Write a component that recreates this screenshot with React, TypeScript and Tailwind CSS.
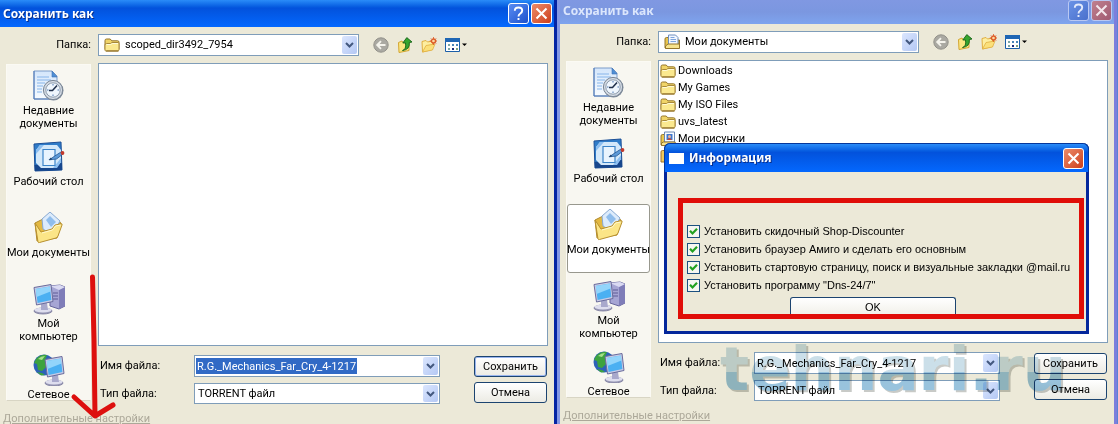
import type { ReactNode } from "react";
import clsx from "clsx";

function FolderIcon() {
  return (
    <svg width="16" height="16" viewBox="0 0 16 16" aria-hidden="true">
      <path d="M1 12.500V3.500Q1 2 2.500 2h3.700l1.600 1.800h5.700Q15 3.800 15 5v7.500z" fill="#f0d468" stroke="#94752a" />
      <path d="M1 13.600V8Q1 6.500 2.500 6.500h4L8 5.500h6q1 0 1 1v6q0 1.200-1 1.200H2.300q-1.300.2-1.300-.1z" fill="#fbe98f" stroke="#a8893a" />
      <path d="M2 14.200h12.500" stroke="#94752a" />
      <path d="M2.500 7.500h4.300l1.500-1H14" fill="none" stroke="#fffbd8" />
    </svg>
  );
}

function DocumentsFolderIcon() {
  return (
    <svg width="16" height="16" viewBox="0 0 16 16" aria-hidden="true">
      <path d="M1 14V5q0-1.500 1.500-1.500H5V14z" fill="#e9c64f" stroke="#94752a" />
      <path d="M14 14V6h1.500v8z" fill="#e9c64f" stroke="#94752a" />
      <path d="M4.500 1h7L14 3.500V12H4.500z" fill="#f2f7ff" stroke="#6f8fbd" />
      <path d="M6.500 3.500h4M6.500 5.500h5.500M6.500 7.500h5.500" stroke="#7fa5dc" />
      <path d="M1.500 14.500V12l2.500-2h11.500v4.500z" fill="#f7e38c" stroke="#94752a" />
    </svg>
  );
}

function PicturesFolderIcon() {
  return (
    <svg width="16" height="16" viewBox="0 0 16 16" aria-hidden="true">
      <path d="M1 14V5q0-1.500 1.500-1.500H5V14z" fill="#e9c64f" stroke="#94752a" />
      <path d="M4.500 1h10v10h-10z" fill="#f8fbff" stroke="#6b87b4" />
      <path d="M6.500 3h6v6h-6z" fill="#3f78cf" />
      <circle cx="9.500" cy="5.500" r="1.500" fill="#f0b49a" />
      <path d="M7 9q2.500-3.500 5 0z" fill="#c9452f" />
      <path d="M1.500 14.500V12L3.500 11h11.700v3.500z" fill="#f7e38c" stroke="#94752a" />
    </svg>
  );
}

function MusicFolderIcon() {
  return (
    <svg width="16" height="16" viewBox="0 0 16 16" aria-hidden="true">
      <path d="M1 14V4q0-1.500 1.500-1.500h4L8 4h6v10z" fill="#f0c95c" stroke="#a0702a" />
      <path d="M5 11V6l5-1v5" fill="none" stroke="#d04b30" strokeWidth="1.500" />
    </svg>
  );
}

function RecentIcon() {
  return (
    <svg width="32" height="32" viewBox="0 0 32 32" aria-hidden="true">
      <defs>
        <linearGradient id="recent-page" x1="0" y1="0" x2="0" y2="1">
          <stop offset="0" stopColor="#d4e6fb" />
          <stop offset="1" stopColor="#f7fbff" />
        </linearGradient>
      </defs>
      <path d="M1 1h18l5 5v23H1z" fill="url(#recent-page)" stroke="#7d9cc9" />
      <path d="M1 1v28h20" fill="none" stroke="#4f79b7" />
      <path d="M19 1v6h5z" fill="#4d8fd6" stroke="#3f74b5" strokeWidth=".6" />
      <path d="M4 7h12M4 10h14M4 13h8M4 16h6M4 19h5M4 22h5" stroke="#86b5ea" />
      <circle cx="20.500" cy="20.500" r="10" fill="#7b8798" />
      <circle cx="20" cy="20" r="9.600" fill="#d3dae3" stroke="#7b8796" />
      <circle cx="20" cy="20" r="7.200" fill="#eff6fd" stroke="#8f9dad" />
      <path d="M20 14v1.500M20 24.500V26M14 20h1.500M24.500 20H26" stroke="#4e78b2" />
      <path d="M24 15.500 19.500 20.500H16" fill="none" stroke="#22324c" strokeWidth="1.600" />
    </svg>
  );
}

function DesktopIcon() {
  return (
    <svg width="32" height="32" viewBox="0 0 32 32" aria-hidden="true">
      <path d="M1 3 28 1l1 28-27 1z" fill="#2f7cc9" stroke="#1c4f96" />
      <path d="M1.500 24 29 22v7L2 30z" fill="#17468c" />
      <path d="M7 4h17l4 5v12l-5 6H8l-5-5V9z" fill="#d3e8fa" />
      <path d="M7 4 3 9v4l8-9zM24 27l4-6v-4l-8 10z" fill="#8cbef0" />
      <path d="M10 8.500h12v16H10z" fill="#e9f4fe" stroke="#3c84c8" strokeWidth="1.200" />
      <path d="M21 15.500 28 11l2 2-6.500 5-7 .8z" fill="#5d9ad8" stroke="#24568f" strokeWidth=".8" />
      <path d="M15.500 19l2.500-2.500 1 2z" fill="#173d6b" />
      <circle cx="29.500" cy="12" r="1.900" fill="#c33a2c" />
    </svg>
  );
}

function MyDocumentsIcon() {
  return (
    <svg width="32" height="32" viewBox="0 0 32 32" aria-hidden="true">
      <path d="M2 11 10 7l13 1 5 3-4 15L4 29z" fill="#e3b840" stroke="#b08a2c" />
      <path d="M9 7 17 0l10 9-8 14-9-6z" fill="#dcebfb" stroke="#88a9d2" />
      <path d="M13 8l4-4 6 6-5 5z" fill="#8fbdec" />
      <path d="M2 11 5 30q.5 1 1.500.5L23 26q1.500-.5 2-2l4-11q.5-1.500-1-1.200L22 13l-3 4-11 3z" fill="#fbe587" stroke="#b8902f" />
      <path d="M9 21l10.500-3 3-4 5-1" fill="none" stroke="#fff9cf" />
    </svg>
  );
}

function MonitorShape() {
  return (
    <g>
      <ellipse cx="10" cy="28" rx="9" ry="3" fill="#9b9bb8" stroke="#77779a" strokeWidth=".8" />
      <ellipse cx="10" cy="27" rx="8.500" ry="2.500" fill="#dedeee" />
      <path d="M8 20h6l1 7H8z" fill="#a9a9cc" />
      <path d="M1 4.500 18 1.500l2 17L3.500 22z" fill="#c9cbe6" stroke="#6a6c9c" />
      <path d="M2.800 6 16.800 3.500l1.600 13.500L4.600 20z" fill="#4bb0f2" />
      <path d="M2.800 6 16.800 3.500l.7 5L3.500 14z" fill="#93d5fb" />
    </g>
  );
}

function ComputerIcon() {
  return (
    <svg width="32" height="32" viewBox="0 0 32 32" aria-hidden="true">
      <path d="M17 3 27 2l5 2v19l-6 3-9-3z" fill="#a6a5d4" stroke="#66659c" />
      <path d="M26 7v19l6-3V4z" fill="#7f7db8" />
      <path d="M17 3 27 2l5 2-6 3z" fill="#dadaf2" />
      <path d="M20 10h5M20 13h5M20 16h5" stroke="#5d5b95" />
      <MonitorShape />
    </svg>
  );
}

function NetworkIcon() {
  return (
    <svg width="32" height="32" viewBox="0 0 32 32" aria-hidden="true">
      <circle cx="11" cy="11" r="10.500" fill="#2d62b8" />
      <path d="M3 5q5-5 11-4l-2 5 3 5-6 6-4-1-1-6-3-1zM4 18l5 1 3 2-4 .5z" fill="#3da33f" />
      <path d="M5 5q3-3 7-3L9 6z" fill="#a5e08a" />
      <g transform="translate(11 1)">
        <MonitorShape />
      </g>
    </svg>
  );
}

function BackIcon() {
  return (
    <svg width="16" height="16" viewBox="0 0 16 16" aria-hidden="true">
      <circle cx="8" cy="8" r="7.200" fill="#aaa9a2" stroke="#92918a" />
      <path d="M12.500 8H4.500M8 4.200 4.200 8 8 11.800" fill="none" stroke="#f4f3ec" strokeWidth="1.900" />
    </svg>
  );
}

function UpIcon() {
  return (
    <svg width="16" height="16" viewBox="0 0 16 16" aria-hidden="true">
      <path d="M1.500 5.500 5 4l1 1.500 6-1v9L2 15.500z" fill="#fae782" stroke="#d3a530" />
      <path d="M5.500 13.500q4-1 3-7.500H5.800L9.800.6 15 5l-2.700.6q.8 7-6.800 7.900z" fill="#35a52e" stroke="#176317" strokeWidth=".9" />
    </svg>
  );
}

function NewFolderIcon() {
  return (
    <svg width="16" height="16" viewBox="0 0 16 16" aria-hidden="true">
      <path d="M1 4.500 5 3.500 6.500 5l5-1v8.500L1.500 15z" fill="#fdeea0" stroke="#e0ae40" />
      <path d="M1.500 15 5 8.500l9-1.500-2.500 6z" fill="#fbe07a" stroke="#e0ae40" strokeWidth=".8" />
      <circle cx="12.500" cy="4" r="2" fill="#fbd9a0" stroke="#dd5a26" strokeWidth="1.300" />
      <path d="M12.500.2v1.600M12.500 6.200v1.600M8.800 4h1.500M14.700 4H16M10 1.500l1 1M15 1.500l-1 1M15 6.500l-1-1" stroke="#dd5a26" />
    </svg>
  );
}

function ViewIcon() {
  return (
    <svg width="22" height="16" viewBox="0 0 22 16" aria-hidden="true">
      <path d="M.5 1.500h14v13H.5z" fill="#fff" stroke="#1c5fa8" />
      <path d="M0 1h15v4H0z" fill="#1f66b4" />
      <path d="M3 7h2v2H3zM3 11h2v2H3z" fill="#7aa6a6" />
      <path d="M7 7h2v2H7zM11 7h2v2h-2z" fill="#4a86b8" />
      <path d="M7 11h2v2H7z" fill="#182c7c" />
      <path d="M11 11h2v2h-2z" fill="#7da27d" />
      <path d="M17 6.500h5L19.500 9z" fill="#000" />
    </svg>
  );
}

function DropArrow() {
  return (
    <span className="pointer-events-none m-px flex w-[15px] items-center justify-center rounded-[2px] bg-gradient-to-br from-[#dbe6fe] to-[#b4c8f4]">
      <svg width="9" height="6" viewBox="0 0 9 6" aria-hidden="true">
        <path d="M1 1l3.500 3.500L8 1" fill="none" stroke="#43587f" strokeWidth="2" />
      </svg>
    </span>
  );
}

function CaptionButton({ kind, inactive }: { kind: "help" | "close"; inactive?: boolean }) {
  return (
    <button
      type="button"
      aria-label={kind === "help" ? "Справка" : "Закрыть"}
      className={clsx(
        "flex size-[21px] shrink-0 items-center justify-center rounded-[3px] border bg-gradient-to-br",
        inactive ? "border-[#b9c8f3]" : "border-white",
        kind === "help" && (inactive ? "from-[#6a92e6] to-[#4a70cc]" : "from-[#5a8cf2] to-[#1c50cc]"),
        kind === "close" && (inactive ? "from-[#c0808e] to-[#a05a72]" : "from-[#ec8a68] to-[#cc3d18]"),
      )}
    >
      {kind === "help" ? (
        <svg width="13" height="15" viewBox="0 0 13 15" aria-hidden="true">
          <path d="M2.800 4.800Q2.800 1.500 6.500 1.500t3.700 3.100q0 1.700-1.900 2.900T6.500 10.500M6.500 12v2" fill="none" stroke={inactive ? "#e3eafb" : "#fff"} strokeWidth="1.900" />
        </svg>
      ) : (
        <svg width="13" height="13" viewBox="0 0 13 13" aria-hidden="true">
          <path d="M1.500 1.500l10 10M11.500 1.500l-10 10" stroke={inactive ? "#f3e6ec" : "#fff"} strokeWidth="2.100" />
        </svg>
      )}
    </button>
  );
}

const places = [
  { label: "Недавние документы", icon: <RecentIcon /> },
  { label: "Рабочий стол", icon: <DesktopIcon /> },
  { label: "Мои документы", icon: <MyDocumentsIcon /> },
  { label: "Мой компьютер", icon: <ComputerIcon /> },
  { label: "Сетевое", icon: <NetworkIcon /> },
];

const comboFrame = "grid border border-[#7f9db9] bg-white";
const pushButton =
  "h-[21px] rounded-[3px] border border-[#1c4470] bg-gradient-to-b from-white to-[#ecebe4] text-center";

type SaveDialogProps = {
  id: string;
  folder: string;
  folderIcon: ReactNode;
  inactive?: boolean;
  selectedPlace?: string;
  children?: ReactNode;
};

function SaveDialog({ id, folder, folderIcon, inactive, selectedPlace, children }: SaveDialogProps) {
  return (
    <section
      className={clsx(
        "bg-[#ece9d8]",
        inactive ? "border-x-[3px] border-l-[#8397e4] border-r-[#7c7fdc]" : "border-r-[3px] border-[#0424a4]",
      )}
    >
      <header
        className={clsx(
          "flex items-center gap-[2px] pr-[2px] pl-[3px]",
          inactive
            ? "h-6 bg-gradient-to-b from-[#8098e2] via-[#7b97e0] to-[#7ea4ee] pb-[3px]"
            : "h-[27px] bg-gradient-to-b from-[#2a8cf8] via-[#0352dc] via-30% to-[#0468fe]",
        )}
      >
        <h1
          className={clsx(
            "flex-1 font-['Noto_Sans',sans-serif] text-[12px] leading-4 font-bold",
            inactive ? "text-[#dbe6fc]" : "text-white [text-shadow:1px_1px_#0a2f8c]",
          )}
        >
          Сохранить как
        </h1>
        <CaptionButton kind="help" inactive={inactive} />
        <CaptionButton kind="close" inactive={inactive} />
      </header>

      <div className="flex items-center pt-[7px]">
        <label htmlFor={id + "-folder"} className="w-[98px] pr-[7px] text-right">
          Папка:
        </label>
        <div className={clsx(comboFrame, "h-[22px] flex-1")}>
          <select id={id + "-folder"} className="col-start-1 row-start-1 appearance-none pl-[26px] outline-none">
            <option>{folder}</option>
          </select>
          <span className="pointer-events-none col-start-1 row-start-1 self-center justify-self-start pl-[5px]">{folderIcon}</span>
          <span className="pointer-events-none col-start-1 row-start-1 flex justify-self-end">
            <DropArrow />
          </span>
        </div>
        <div className="flex w-[195px] gap-2 pl-[14px]">
          <button type="button" aria-label="Назад"><BackIcon /></button>
          <button type="button" aria-label="На один уровень вверх"><UpIcon /></button>
          <button type="button" aria-label="Создать папку"><NewFolderIcon /></button>
          <button type="button" aria-label="Вид"><ViewIcon /></button>
        </div>
      </div>

      <div className="mt-[7px] flex gap-[7px] pr-[6px] pl-[6px]">
        <nav className="mt-px flex h-[337px] w-[85px] shrink-0 flex-col gap-[2px] border border-[#fbfaf4] border-b-[#d8d5c4] bg-[#f8f7f1]">
          {places.map((place) => (
            <button
              key={place.label}
              type="button"
              className={clsx(
                "flex h-[69px] shrink-0 flex-col items-center gap-[2px] border pt-1 leading-[13px] last:h-[51px]",
                place.label === selectedPlace ? "rounded-[3px] border-[#98988e] bg-white" : "border-transparent",
              )}
            >
              <span className="shrink-0">{place.icon}</span>
              <span className={clsx(place.label.startsWith("Мои") ? "whitespace-nowrap" : "w-[70px]")}>{place.label}</span>
            </button>
          ))}
        </nav>

        <div className="min-w-0 flex-1">
          <div className="h-[283px] border border-[#7f9db9] bg-white p-px">{children}</div>
          <div className="mt-[9px] flex gap-[34px] pr-px">
            <div className="grid flex-1 grid-cols-[96px_1fr] items-center gap-y-[6px]">
              <label htmlFor={id + "-name"} className="pl-[2px]">
                Имя файла:
              </label>
              <div className="flex h-[22px] items-center justify-between border border-[#7f9db9] bg-white">
                <input
                  id={id + "-name"}
                  defaultValue="R.G._Mechanics_Far_Cry_4-1217"
                  className={clsx(
                    "ml-px field-sizing-content h-4 min-w-0 px-px outline-none",
                    !inactive && "bg-[#316ac5] text-white",
                  )}
                />
                <button type="button" aria-label="Список имён" className="flex self-stretch">
                  <DropArrow />
                </button>
              </div>
              <label htmlFor={id + "-type"} className="pl-[2px]">
                Тип файла:
              </label>
              <div className={clsx(comboFrame, "h-[21px]")}>
                <select id={id + "-type"} className="col-start-1 row-start-1 appearance-none pl-[3px] outline-none">
                  <option>TORRENT файл</option>
                </select>
                <span className="pointer-events-none col-start-1 row-start-1 flex justify-self-end">
                  <DropArrow />
                </span>
              </div>
            </div>
            <div className="flex w-[73px] flex-col gap-[5px] pt-px">
              <button type="button" className={clsx(pushButton, !inactive && "shadow-[inset_0_0_0_1px_#9ab5ee]")}>
                Сохранить
              </button>
              <button type="button" className={pushButton}>
                Отмена
              </button>
            </div>
          </div>
        </div>
      </div>

      <a href="#settings" className="mt-2 ml-[3px] block leading-[14px] text-[#aca899] underline">
        Дополнительные настройки
      </a>
    </section>
  );
}

const files = [
  { name: "Downloads", icon: <FolderIcon /> },
  { name: "My Games", icon: <FolderIcon /> },
  { name: "My ISO Files", icon: <FolderIcon /> },
  { name: "uvs_latest", icon: <FolderIcon /> },
  { name: "Мои рисунки", icon: <PicturesFolderIcon /> },
  { name: "", icon: <MusicFolderIcon /> },
];

const offers = [
  "Установить скидочный Shop-Discounter",
  "Установить браузер Амиго и сделать его основным",
  "Установить стартовую страницу, поиск и визуальные закладки @mail.ru",
  'Установить программу "Dns-24/7"',
];

function InfoDialog() {
  return (
    <section
      role="dialog"
      aria-labelledby="info-title"
      className="absolute top-[143px] right-[28px] left-[107px] rounded-t-[6px] border-x-[3px] border-b-[3px] border-[#04279c] bg-[#ece9d8]"
    >
      <header className="-mx-[3px] flex h-[29px] items-center gap-[5px] rounded-t-[6px] border-x border-t border-[#04379c] bg-gradient-to-b from-[#2a8cf8] via-[#0352dc] via-30% to-[#0468fe] px-[4px]">
        <span className="h-[11px] w-[15px] bg-white" />
        <h2 id="info-title" className="flex-1 font-['Noto_Sans',sans-serif] text-[12px] leading-4 font-bold text-white [text-shadow:1px_1px_#0a2f8c]">
          Информация
        </h2>
        <CaptionButton kind="close" />
      </header>
      <div className="mt-[26px] mr-[2px] mb-3 ml-[11px] border-[5px] border-[#e00d08] pt-[19px] font-['Liberation_Sans',sans-serif]">
        {offers.map((offer) => (
          <label key={offer} className="flex h-[18px] items-center gap-1 pl-1 whitespace-nowrap">
            <span className="grid size-[13px] shrink-0 place-items-center border border-[#1c5180] bg-[#f5f6f1]">
              <input
                type="checkbox"
                defaultChecked
                className="peer col-start-1 row-start-1 size-[11px] appearance-none"
              />
              <svg className="pointer-events-none invisible col-start-1 row-start-1 peer-checked:visible" width="9" height="9" viewBox="0 0 9 9" aria-hidden="true">
                <path d="M1 3.800 3.500 6.500 8 1.800" fill="none" stroke="#21a121" strokeWidth="2.200" />
              </svg>
            </span>
            {offer}
          </label>
        ))}
        <div className="mt-[3px] flex pr-[123px] pl-[107px]">
          <button type="button" className="h-[17px] flex-1 rounded-t-[3px] border border-b-0 border-[#1c4470] bg-gradient-to-b from-white to-[#f2f1ea] pt-[2px]">
            OK
          </button>
        </div>
      </div>
    </section>
  );
}

export default function App() {
  return (
    <main className="relative grid h-screen grid-cols-[557fr_560fr] overflow-hidden bg-[#5a84d4] pr-px font-[Roboto,sans-serif] text-[11px] leading-[14px] text-black">
      <SaveDialog id="left" folder="scoped_dir3492_7954" folderIcon={<FolderIcon />} />
      <div className="relative grid">
        <SaveDialog
          id="right"
          folder="Мои документы"
          folderIcon={<DocumentsFolderIcon />}
          inactive
          selectedPlace="Мои документы"
        >
          <ul>
            {files.map((file) => (
              <li key={file.name} className="flex h-[17px] items-center gap-[2px]">
                {file.icon}
                {file.name}
              </li>
            ))}
          </ul>
        </SaveDialog>
        <InfoDialog />
        <p className="pointer-events-none absolute top-[334px] left-[163px] bg-gradient-to-b from-[#b9d5e2] from-55% to-[#76afd2] to-55% bg-clip-text font-['DejaVu_Sans',sans-serif] text-[61px] leading-[70px] font-bold text-transparent opacity-75 mix-blend-multiply drop-shadow-[2px_2px_0_#b5b8b4] select-none">
          tehnari.ru
        </p>
      </div>
      <svg className="pointer-events-none absolute top-[270px] left-[68px]" width="56" height="154" viewBox="0 0 56 154" fill="none" aria-hidden="true">
        <path d="M24.500 7 26 70l1 76M6 127l21 19 18-11" stroke="#dd100e" strokeWidth="5" strokeLinecap="round" strokeLinejoin="round" />
      </svg>
    </main>
  );
}
